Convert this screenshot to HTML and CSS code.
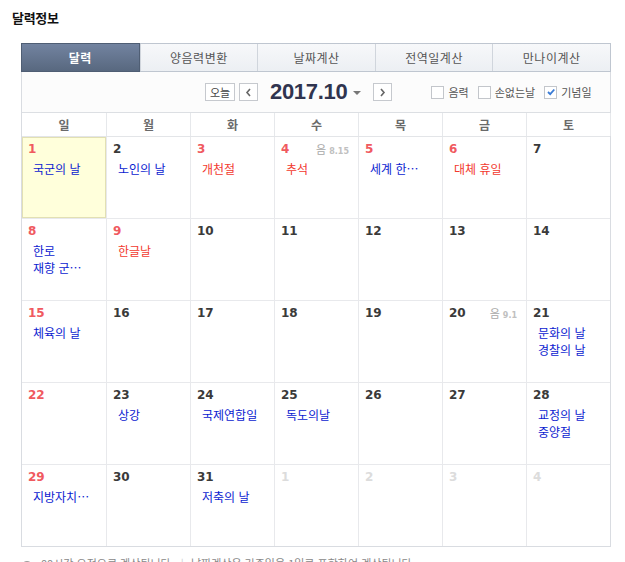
FILE: index.html
```html
<!DOCTYPE html>
<html lang="ko">
<head>
<meta charset="utf-8">
<link rel="stylesheet" href="styles.css">
</head>
<body>
<div class="page">
  <h2 class="title">달력정보</h2>
  <div class="tabs">
    <div class="tab active">달력</div>
    <div class="tab">양음력변환</div>
    <div class="tab">날짜계산</div>
    <div class="tab">전역일계산</div>
    <div class="tab">만나이계산</div>
  </div>
  <div class="cal">
    <div class="ctrl">
      <span class="btn today">오늘</span>
      <span class="btn arrow"><svg width="7" height="9" viewBox="0 0 7 9"><path d="M5 1 L2 4.5 L5 8" fill="none" stroke="#666" stroke-width="1.6"/></svg></span>
      <span class="ym">2017.10</span>
      <span class="caret"></span>
      <span class="btn arrow next"><svg width="7" height="9" viewBox="0 0 7 9"><path d="M2 1 L5 4.5 L2 8" fill="none" stroke="#666" stroke-width="1.6"/></svg></span>
      <div class="checks">
        <label class="chk"><span class="box"></span>음력</label>
        <label class="chk"><span class="box"></span>손없는날</label>
        <label class="chk"><span class="box on"><svg width="10" height="10" viewBox="0 0 10 10"><path d="M2 5 L4.2 7.2 L8.3 2.5" fill="none" stroke="#3a7bd5" stroke-width="1.8"/></svg></span>기념일</label>
      </div>
    </div>
    <div class="week">
      <div>일</div><div>월</div><div>화</div><div>수</div><div>목</div><div>금</div><div>토</div>
    </div>
    <div class="grid">
      <div class="cell today-cell"><span class="num red">1</span><p class="ev">국군의 날</p></div>
      <div class="cell"><span class="num">2</span><p class="ev">노인의 날</p></div>
      <div class="cell"><span class="num red">3</span><p class="ev hol">개천절</p></div>
      <div class="cell"><span class="num red">4</span><span class="lunar">음 <b>8.15</b></span><p class="ev hol">추석</p></div>
      <div class="cell"><span class="num red">5</span><p class="ev">세계 한…</p></div>
      <div class="cell"><span class="num red">6</span><p class="ev hol">대체 휴일</p></div>
      <div class="cell"><span class="num">7</span></div>

      <div class="cell"><span class="num red">8</span><p class="ev">한로</p><p class="ev">재향 군…</p></div>
      <div class="cell"><span class="num red">9</span><p class="ev hol">한글날</p></div>
      <div class="cell"><span class="num">10</span></div>
      <div class="cell"><span class="num">11</span></div>
      <div class="cell"><span class="num">12</span></div>
      <div class="cell"><span class="num">13</span></div>
      <div class="cell"><span class="num">14</span></div>

      <div class="cell"><span class="num red">15</span><p class="ev">체육의 날</p></div>
      <div class="cell"><span class="num">16</span></div>
      <div class="cell"><span class="num">17</span></div>
      <div class="cell"><span class="num">18</span></div>
      <div class="cell"><span class="num">19</span></div>
      <div class="cell"><span class="num">20</span><span class="lunar">음 <b>9.1</b></span></div>
      <div class="cell"><span class="num">21</span><p class="ev">문화의 날</p><p class="ev">경찰의 날</p></div>

      <div class="cell"><span class="num red">22</span></div>
      <div class="cell"><span class="num">23</span><p class="ev">상강</p></div>
      <div class="cell"><span class="num">24</span><p class="ev">국제연합일</p></div>
      <div class="cell"><span class="num">25</span><p class="ev">독도의날</p></div>
      <div class="cell"><span class="num">26</span></div>
      <div class="cell"><span class="num">27</span></div>
      <div class="cell"><span class="num">28</span><p class="ev">교정의 날</p><p class="ev">중양절</p></div>

      <div class="cell"><span class="num red">29</span><p class="ev">지방자치…</p></div>
      <div class="cell"><span class="num">30</span></div>
      <div class="cell"><span class="num">31</span><p class="ev">저축의 날</p></div>
      <div class="cell"><span class="num dim">1</span></div>
      <div class="cell"><span class="num dim">2</span></div>
      <div class="cell"><span class="num dim">3</span></div>
      <div class="cell"><span class="num dim">4</span></div>
    </div>
  </div>
  <p class="note"><span class="info">i</span>00시간 오전으로 계산됩니다. <span class="bar">|</span> 날짜계산은 기준일을 1일로 포함하여 계산됩니다.</p>
</div>
</body>
</html>
```
FILE: styles.css
```css
* { box-sizing: border-box; }
html, body { margin: 0; padding: 0; background: #fff; }
body { font-family: "Noto Sans CJK KR", "Noto Sans", sans-serif; color: #333; }
.page { padding: 9px 14px 0 12px; width: 625px; }
.title { margin: 0; font-size: 13px; font-weight: bold; color: #111; line-height: 17px; letter-spacing: -0.3px; }
.tabs { display: flex; margin: 17px 0 0 9px; width: 590px; height: 29px; border: 1px solid #bfc6d0; }
.tab { flex: 1; display: flex; align-items: center; justify-content: center; font-size: 12px; color: #555; background: linear-gradient(#f7f8fa, #eceff3); border-left: 1px solid #d0d5dc; letter-spacing: 0.5px; }
.tab:first-child { border-left: none; }
.tab.active { background: linear-gradient(#7283a0, #58687f); color: #fff; font-weight: bold; border: 1px solid #4f5e74; margin: -1px 0 -1px -1px; }
.cal { margin-left: 9px; width: 590px; border: 1px solid #d9dce1; border-top: none; }
.ctrl { height: 41px; display: flex; align-items: center; background: #fcfcfc; border-bottom: 1px solid #dcdfe3; padding-left: 183px; }
.btn { display: inline-flex; align-items: center; justify-content: center; height: 18px; border: 1px solid #c6c9ce; background: #fff; font-size: 11px; color: #444; }
.today { width: 30px; margin-right: 4px; }
.arrow { width: 19px; }
.ym { font-family: "Liberation Sans", Arial, sans-serif; font-weight: bold; font-size: 22px; color: #30344f; margin-left: 12px; letter-spacing: -0.3px; line-height: 24px; }
.caret { width: 0; height: 0; border-left: 4px solid transparent; border-right: 4px solid transparent; border-top: 4px solid #777; margin: 2px 0 0 6px; }
.next { margin-left: 12px; }
.checks { display: flex; align-items: center; margin-left: 39px; gap: 9px; }
.chk { display: flex; align-items: center; gap: 4px; font-size: 11px; color: #555; }
.box { width: 13px; height: 13px; border: 1px solid #c3c6cb; background: #fff; display: inline-flex; align-items: center; justify-content: center; }
.week { display: grid; grid-template-columns: 84px repeat(6, 83px); column-gap: 1px; height: 24px; border-bottom: 1px solid #e3e5e8; }
.week div { display: flex; align-items: center; justify-content: center; font-size: 12px; font-weight: bold; color: #6a6a6a; box-shadow: 1px 0 0 #e6e8eb; }
.grid { display: grid; grid-template-columns: 84px repeat(6, 83px); grid-auto-rows: 81px; gap: 1px; background: #e8e9ec; }
.cell { background: #fff; position: relative; padding: 5px 0 0 6px; }
.today-cell { background: #ffffdb; box-shadow: inset 0 0 0 1px #e2e0b3; }
.num { display: block; font-family: "DejaVu Sans", Verdana, sans-serif; font-weight: bold; font-size: 12px; line-height: 15px; color: #3a3a3a; }
.num.red { color: #f05a5f; }
.num.dim { color: #dcdcdc; }
.lunar { position: absolute; top: 5px; right: 9px; font-size: 11px; color: #a8a8a8; line-height: 14px; }
.lunar b { font-family: "DejaVu Sans", Verdana, sans-serif; font-size: 8px; color: #c0c0c0; }
.ev { margin: 0 0 0 5px; font-size: 12px; line-height: 17px; color: #0b1bd0; white-space: nowrap; }
.num + .ev, .lunar + .ev { margin-top: 3px; }
.ev.hol { color: #f2392e; }
.note { margin: 9px 0 0 9px; font-size: 11px; color: #888; line-height: 14px; white-space: nowrap; }
.info { display: inline-flex; width: 12px; height: 12px; border: 1px solid #999; border-radius: 50%; font-size: 9px; align-items: center; justify-content: center; margin-right: 8px; color: #888; vertical-align: -2px; }
.bar { color: #ccc; margin: 0 4px; }
```
